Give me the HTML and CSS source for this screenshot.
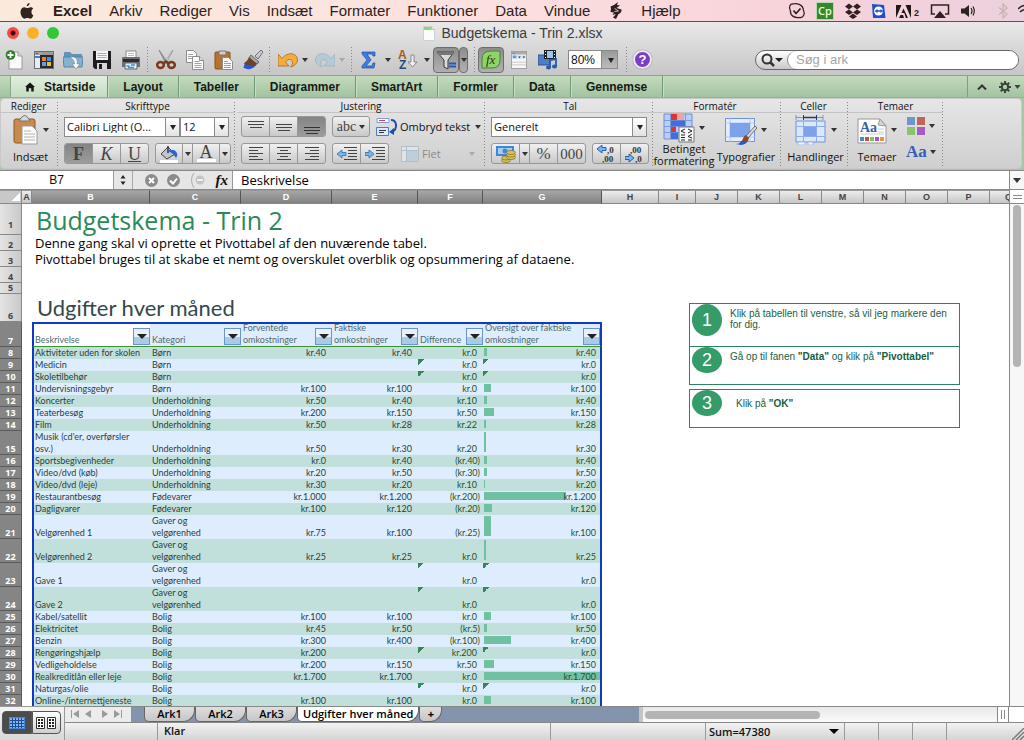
FILE: index.html
```html
<!DOCTYPE html>
<html lang="da">
<head>
<meta charset="utf-8">
<title>Budgetskema - Trin 2.xlsx</title>
<link rel="stylesheet" href="styles.css">
</head>
<body>
<nav class="menubar" aria-label="Menulinje">
  <svg class="apple" viewBox="0 0 14 16" width="14" height="16"><path d="M9.6 0c.1 1.600-1.300 3.200-2.800 3.200C6.600 1.700 8.100.2 9.600 0zM13.300 12.400c-.7 1.600-1.700 3.300-3 3.300-1.100 0-1.500-.7-2.900-.7s-1.800.7-2.900.7C2.700 15.700.5 12.200.5 9 .5 6 2.400 4.300 4.300 4.300c1.200 0 2.100.8 3 .8.900 0 2-.9 3.300-.9 1 0 2 .5 2.600 1.400-2.500 1.500-2.100 5.500.1 6.800z" fill="#33241f"/></svg>
  <button class="app">Excel</button>
  <button>Arkiv</button>
  <button>Rediger</button>
  <button>Vis</button>
  <button>Indsæt</button>
  <button>Formater</button>
  <button>Funktioner</button>
  <button>Data</button>
  <button>Vindue</button>
  <svg class="script" viewBox="0 0 12 17" width="12" height="17"><path d="M4 3l4-3-1 3 3 .5L6.500 6l5 1.500C12 10 10 11.500 8.500 12L6 17l-3-1.500L6 12 2.500 13 4 10.500.5 10 1 6.500l-.5-2z" fill="#2e1f1e"/><path d="M4.500 6.500l4 2.500-4 .5" fill="none" stroke="#f8d4da" stroke-width=".8"/></svg>
  <button>Hjælp</button>
  <div class="tray">
    <svg viewBox="0 0 18 18" width="18" height="18"><path d="M5 2C8 1 15 2 15.500 8.500 17.500 12 15 16 12 15.500 6 16.500 2 13 2.500 9 0 5 2.500 1.500 5 2z" fill="none" stroke="#2f2322" stroke-width="1.300"/><path d="M5.500 8.500l2.500 3 4.500-5" fill="none" stroke="#2f2322" stroke-width="1.800"/></svg>
    <svg viewBox="0 0 18 18" width="18" height="18"><rect x=".5" y=".5" width="17" height="17" fill="#37862f" stroke="#b8d8ab"/><text x="9" y="13" text-anchor="middle" font-family="Open Sans" font-size="11" font-weight="600" fill="#e4ffd0">Cp</text></svg>
    <svg viewBox="0 0 18 18" width="18" height="18"><path d="M5 1.500L9 4.500 5 7.500 1 4.500zM13 1.500l4 3-4 3-4-3zM5 7.500l4 3-4 2.500-4-3zM13 7.500l4 2.500-4 3-4-2.500zM9 11.500l4 3-4 2.500-4-2.500z" fill="#30201f"/></svg>
    <svg viewBox="0 0 14 16" width="14" height="16"><path d="M0 1l12 1 1.500 13H1z" fill="#1c50cf"/><circle cx="6.500" cy="8" r="4.500" fill="#fff"/><path d="M2.500 8l3-2v1.200h3V6l3 2-3 2V8.800h-3V10z" fill="#1c50cf"/></svg>
    <svg viewBox="0 0 24 16" width="24" height="16"><path d="M0 2h15v13H0z" fill="#221819"/><path d="M5.500 2h4L15 15h-3L7.500 5.500 5.500 10h2.800l1.500 5H8l-1-3H4.500L3 15H0z" fill="#f4d5dc"/><text x="18" y="13" font-family="Liberation Sans" font-size="9" font-weight="700" fill="#2f2322">2</text></svg>
    <svg viewBox="0 0 20 16" width="20" height="16"><path d="M5 11H1.500V2h17v9H15" fill="none" stroke="#2f2322" stroke-width="1.500"/><path d="M10 8l6 7H4z" fill="#2f2322"/></svg>
    <svg viewBox="0 0 16 16" width="16" height="16"><path d="M1 5.500h3.500L9 2v12L4.500 10.500H1z" fill="#2f2322"/><path d="M11 5q2 3 0 6M13 3.500q2.500 4.500 0 9" fill="none" stroke="#2f2322" stroke-width="1.200"/></svg>
    <svg class="bt" viewBox="0 0 10 16" width="10" height="16"><path d="M1 4.500l8 6.500-4 4V1l4 4-8 6.500" fill="none" stroke="#c7b3b2" stroke-width="1.300"/></svg>
    <svg viewBox="0 0 6 16" width="6" height="16"><path d="M0 6q3-3 6-3.500M2 9q2-2 4-2.300" fill="none" stroke="#2f2322" stroke-width="1.500"/></svg>
  </div>
</nav>

<header class="chrome">
  <div class="titlebar">
    <div class="lights"><button class="red" aria-label="Luk"></button><button class="amber" aria-label="Minimer"></button><button class="green" aria-label="Zoom"></button></div>
    <div class="doc">
      <svg viewBox="0 0 12 15" width="12" height="15"><path d="M.5.5h8l3 3v11H.5z" fill="#fbfdfb" stroke="#cfd3cf"/><path d="M1 1h7v3H1z" fill="#8bd77f"/><path d="M8.500.5v3h3" fill="#dfe8df" stroke="#bbb"/></svg>
      <h1>Budgetskema - Trin 2.xlsx</h1>
    </div>
  </div>
  <div class="toolbar">
    <button class="tool" aria-label="Ny"><svg viewBox="0 0 20 20" width="20" height="20"><path d="M4 2h9l4 4v13H4z" fill="#fafafa" stroke="#999"/><path d="M13 2v4h4" fill="#ddd" stroke="#999"/><circle cx="5.500" cy="5" r="4.800" fill="#2a7f22"/><path d="M5.500 2v6M2.500 5h6" stroke="#fff" stroke-width="1.800"/></svg></button>
    <button class="tool" aria-label="Galleri"><svg viewBox="0 0 20 20" width="20" height="20"><rect x=".5" y="1.500" width="19" height="17" fill="#e8eef5" stroke="#6b6f74"/><path d="M1 2h18v3H1z" fill="#9b9b9b"/><path d="M2 3h2v1H2z" fill="#e33"/><path d="M5 3h2v1H5z" fill="#fb3"/><path d="M1 6h5v2H1z" fill="#3b7fe0"/><path d="M6 5h13v13H6z" fill="#2d2a2e"/><path d="M8 7h4v4H8z" fill="#e8853b"/><path d="M13 7h4v4h-4z" fill="#4b8ce8"/><path d="M8 12h4v4H8z" fill="#5d9fe0"/><path d="M13 12h4v4h-4z" fill="#e8c13b"/></svg></button>
    <button class="tool" aria-label="Åbn"><svg viewBox="0 0 20 20" width="20" height="20"><path d="M1 3q0-1 1-1h5l2 2h9q1 0 1 1v11H1z" fill="#5f93b8"/><path d="M0 7h20l-1 10H1z" fill="#85b2d0" stroke="#5785a5"/><path d="M7 7c6-1 8 3 7 7h3l-4 5-4-5h2.500c0-3-1-5-4.500-7z" fill="#fff" stroke="#58788e" stroke-width=".5"/></svg></button>
    <button class="tool" aria-label="Gem"><svg viewBox="0 0 20 20" width="20" height="20"><path d="M1 1h18v18H3l-2-2z" fill="#1d1d20"/><path d="M4 1h12v9H4z" fill="#f2f4f8"/><path d="M5.500 3.500h9M5.500 5.500h9M5.500 7.500h9" stroke="#9fadc6"/><path d="M5 13h10v6H5z" fill="#d7d7d9"/><path d="M7 14h3v5H7z" fill="#1d1d20"/></svg></button>
    <button class="tool" aria-label="Udskriv"><svg viewBox="0 0 20 20" width="20" height="20"><path d="M5 1h10v8H5z" fill="#fdfdfd" stroke="#8a8a8a"/><path d="M7 3.500h6M7 5.500h6" stroke="#bbb"/><path d="M1 8q0-1 1-1h16q1 0 1 1v9H1z" fill="#6c6f73"/><path d="M2 9h16v3H2z" fill="#2b2d30"/><path d="M4 13h12v6H4z" fill="#dff0fb" stroke="#666"/><path d="M5.500 16h3M10 15h4M7 17.500h6" stroke="#3f8ed2" stroke-width="1.500"/></svg></button>
    <i class="dots"></i>
    <button class="tool" aria-label="Klip"><svg viewBox="0 0 20 20" width="20" height="20"><path d="M3 0l9 13-2 1z" fill="#999" stroke="#666" stroke-width=".5"/><path d="M17 0L8 13l2 1z" fill="#ddd" stroke="#777" stroke-width=".5"/><g fill="none" stroke="#7b3a1c" stroke-width="2.500"><ellipse cx="4.500" cy="15" rx="3.300" ry="3"/><ellipse cx="15.500" cy="15" rx="3.300" ry="3"/><path d="M7 13.500l3-2 3 2"/></g></svg></button>
    <button class="tool" aria-label="Kopier"><svg viewBox="0 0 20 20" width="20" height="20"><g fill="#fcfcfc" stroke="#8d8d8d"><path d="M1.500.5h7l3 3v9h-10z"/><path d="M7.500 6.500h7l4 4v9h-11z"/><path d="M14.500 6.500v4h4" fill="#ddd"/></g><path d="M3 4.500h5M3 6.500h4M3 8.500h4M9.500 11.500h5M9.500 13.500h7M9.500 15.500h7M9.500 17.500h7" stroke="#a3a3a3"/></svg></button>
    <button class="tool" aria-label="Sæt ind"><svg viewBox="0 0 20 20" width="20" height="20"><rect x="1" y="2" width="15" height="17" rx="1" fill="#b8722f" stroke="#8a531e"/><path d="M5 1h7v4H5z" fill="#cfcfcf" stroke="#777"/><path d="M8.500 7.500h6l4 4v8h-10z" fill="#fcfcfc" stroke="#8d8d8d"/><path d="M10 11.500h4M10 13.500h7M10 15.500h7M10 17.500h7" stroke="#a3a3a3"/></svg></button>
    <button class="tool" aria-label="Formatpensel"><svg viewBox="0 0 20 20" width="20" height="20"><path d="M12 6l6-6 2 2-5 7z" fill="#c8ccd2" stroke="#6a6f78"/><path d="M8 5l8 7-2 2-8-6z" fill="#a8a8a8" stroke="#666"/><path d="M6 7l8 7c-2 3-5 4-8 4L1 13c2-1 4-3 5-6z" fill="#6d4328"/><path d="M1 13c3 2 6 2 11 3-3 4-9 4-12 1 1 0 2-2 1-4z" fill="#2a55cf"/></svg></button>
    <i class="dots"></i>
    <button class="tool" aria-label="Fortryd"><svg viewBox="0 0 20 20" width="20" height="20"><path d="M0 4v12h11L7.500 12c3-4 7-3 7 1 0 2-1 3-2 4 4-1 7-4 7-7C19.500 3 10 1 4 8.500z" fill="#f5ac3c" stroke="#a3691c" stroke-width=".8"/></svg></button><span class="caret"></span>
    <button class="tool" aria-label="Gentag" disabled><svg viewBox="0 0 20 20" width="20" height="20"><path d="M20 4v12H9l3.500-4c-3-4-7-3-7 1 0 2 1 3 2 4-4-1-7-4-7-7C.5 3 10 1 16 8.500z" fill="#b4cbd6" stroke="#9cb3be" stroke-width=".8"/></svg></button><span class="caret dim"></span>
    <i class="dots last"></i>
    <button class="tool narrow" aria-label="Autosum"><svg viewBox="0 0 16 18" width="16" height="18"><path d="M1 1h13v4h-2l-1-2H6l4 6-5 6h6l1-3h2l-1 5H1v-2l5-6-5-6z" fill="#3c7fe0" stroke="#1f4fa3" stroke-width=".7"/></svg></button><span class="caret wide"></span>
    <button class="tool narrow" aria-label="Sorter"><svg viewBox="0 0 20 20" width="20" height="20"><text x="0" y="9" font-family="Liberation Sans" font-size="12" font-weight="700" fill="#a55b1c">A</text><text x="1" y="19" font-family="Liberation Sans" font-size="12" font-weight="700" fill="#1f4f80">Z</text><path d="M13 5h3v7h3l-4.500 5L10 12h3z" fill="#eee" stroke="#777" stroke-width=".8"/></svg></button><span class="caret wide"></span>
    <button class="tool pressed" aria-label="Filter"><svg viewBox="0 0 20 20" width="20" height="20"><path d="M1 2h17l-6 8v9l-4-2v-7z" fill="#dadada" stroke="#3a3a3a"/><path d="M1 2h17l-2 3H3z" fill="#777"/><path d="M13 13.500h7M13 16.500h7" stroke="#2456c8" stroke-width="2"/></svg></button><button class="pressed slim" aria-label="Filtervalg"><span class="caret"></span></button>
    <i class="dots"></i>
    <button class="tool pressed" aria-label="Formelbygger"><svg viewBox="0 0 20 20" width="20" height="20"><path d="M1 18V9q0-8 9-8h9v9q0 8-8 8z" fill="#8ed36c" stroke="#47852f"/><text x="5" y="14" font-family="Liberation Serif" font-style="italic" font-size="13" fill="#1c3a12">fx</text></svg></button>
    <button class="tool" aria-label="Værktøjskasse"><svg viewBox="0 0 18 20" width="16" height="18"><rect x=".5" y=".5" width="17" height="19" fill="#f7f7f7" stroke="#999"/><path d="M1 1h16v3H1z" fill="#aaa"/><path d="M2 2h2v1H2z" fill="#e33"/><path d="M1 4h16v5H1z" fill="#dce9f7"/><path d="M2 5h4v3H2z" fill="#5b9ae0"/><path d="M8 6h3l-1.500 2zM13 6h3l-1.500 2z" fill="#333"/><path d="M1 12.500h16M1 15.500h16" stroke="#c5c5c5"/></svg></button>
    <button class="tool" aria-label="Medier"><svg viewBox="0 0 20 20" width="20" height="20"><path d="M0 5h12v10H0z" fill="#4d7fc3" stroke="#2d5796"/><path d="M6 0h12v9H6z" fill="#1f2022"/><path d="M9 1h6v7H9z" fill="#9cc7ee"/><path d="M7 1.500h1M7 4.500h1M7 7.500h1M16 1.500h1M16 4.500h1M16 7.500h1" stroke="#fff"/><path d="M12 17v-7l6-1v7" fill="none" stroke="#2b5aa5" stroke-width="1.800"/><ellipse cx="10.500" cy="17.500" rx="2.500" ry="2" fill="#2b5aa5"/><ellipse cx="16.500" cy="16.500" rx="2.500" ry="2" fill="#2b5aa5"/></svg></button>
    <label class="pick zoom"><select aria-label="Zoom"><option>80%</option></select></label>
    <i class="dots"></i>
    <button class="help" aria-label="Hjælp">?</button>
    <div class="search">
      <svg viewBox="0 0 24 16" width="24" height="16"><circle cx="7" cy="7" r="4.500" fill="none" stroke="#333" stroke-width="2"/><path d="M10 10l4 4" stroke="#333" stroke-width="2.500"/><path d="M15 6h8l-4 4z" fill="#222"/></svg>
      <input type="search" placeholder="Søg i ark" aria-label="Søg i ark">
    </div>
  </div>
</header>

<nav class="tabs" aria-label="Bånd">
  <button class="tab active"><svg viewBox="0 0 12 11" width="10" height="10"><path d="M6 0l6 5.500h-1.500V11h-3V7h-3v4h-3V5.500H0z" fill="#151815"/></svg>Startside</button>
  <button class="tab">Layout</button>
  <button class="tab">Tabeller</button>
  <button class="tab">Diagrammer</button>
  <button class="tab">SmartArt</button>
  <button class="tab">Formler</button>
  <button class="tab">Data</button>
  <button class="tab">Gennemse</button>
  <div class="tabtools">
    <button aria-label="Skjul bånd"><svg viewBox="0 0 10 6" width="10" height="6"><path d="M1 5.500l4-4 4 4" fill="none" stroke="#333" stroke-width="2"/></svg></button>
    <button aria-label="Indstillinger"><svg viewBox="0 0 22 12" width="22" height="12"><circle cx="6" cy="6" r="3.200" fill="none" stroke="#39453a" stroke-width="2"/><path d="M6 0v2M6 10v2M0 6h2M10 6h2M1.800 1.800l1.500 1.500M8.700 8.700l1.500 1.500M10.200 1.800L8.700 3.300M3.300 8.700l-1.500 1.500" stroke="#39453a" stroke-width="2"/><path d="M15.500 4h6l-3 4z" fill="#39453a"/></svg></button>
  </div>
</nav>

<div class="ribbon">
  <div class="panel">
    <section class="group g-edit">
      <h2>Rediger</h2>
      <button class="big"><span class="pic"><svg viewBox="0 0 26 30" width="26" height="30"><rect x="1" y="4" width="21" height="24" rx="2" fill="#c98b4d" stroke="#8a5a2a"/><path d="M6 6l2-3q4-5 7 0l2 3z" fill="#d8d8d8" stroke="#777"/><path d="M9 11h10l5 5v13H9z" fill="#fbfbfb" stroke="#999"/><path d="M11 16h7M11 19h11M11 22h11M11 25h11" stroke="#b5b5b5"/></svg><span class="caret"></span></span>Indsæt</button>
    </section>
    <section class="group g-font">
      <h2>Skrifttype</h2>
      <div class="line">
        <label class="pick face"><select aria-label="Skrifttype"><option>Calibri Light (O...</option></select></label><label class="pick size"><select aria-label="Størrelse"><option>12</option></select></label>
      </div>
      <div class="line apart">
        <div class="seg serif"><button class="on"><b>F</b></button><button><em>K</em></button><button><u>U</u></button></div>
        <div class="seg serif"><button aria-label="Fyldfarve"><svg viewBox="0 0 20 18" width="20" height="18"><path d="M9 2l7 7-8 5-6-5z" fill="#bfc6cf" stroke="#444"/><path d="M9 8V1" stroke="#333" stroke-width="1.500"/><path d="M8 5l7 0c4 3 4 5 2 8l-3-4z" fill="#2e63cc"/><path d="M1 15h18v3H1z" fill="#fff"/></svg></button><button class="dd" aria-label="Fyldfarver"><span class="caret"></span></button><button aria-label="Skriftfarve"><span class="ink">A</span></button><button class="dd" aria-label="Skriftfarver"><span class="caret"></span></button></div>
      </div>
    </section>
    <section class="group g-align">
      <h2>Justering</h2>
      <div class="line">
        <div class="seg"><button aria-label="Top"><svg viewBox="0 0 16 16" width="16" height="16"><path d="M0 2.500h16M0 5.500h16M2 8.500h12" stroke="#444"/></svg></button><button aria-label="Midt"><svg viewBox="0 0 16 16" width="16" height="16"><path d="M0 5.500h16M0 8.500h16M2 11.500h12" stroke="#444"/></svg></button><button class="on" aria-label="Bund"><svg viewBox="0 0 16 16" width="16" height="16"><path d="M0 8.500h16M0 11.500h16M2 14.500h12" stroke="#333"/></svg></button></div>
        <div class="seg serif abc"><button>abc<span class="caret"></span></button></div>
        <button class="flat wrap"><svg viewBox="0 0 22 20" width="22" height="20"><path d="M1 1.500h12v4H1z" fill="#fff" stroke="#7d9fdc"/><path d="M3 3.500h6" stroke="#d44"/><path d="M.5 10.500h12v8H.5z" fill="#dce8fb" stroke="#4d7acb"/><path d="M3 13.500h7M3 15.500h5" stroke="#333"/><path d="M15 3c6 0 7 9 1 12" fill="none" stroke="#1f4fa3" stroke-width="2"/><path d="M13 15l5-4v7z" fill="#1f4fa3"/></svg><span>Ombryd tekst</span><i class="caret"></i></button>
      </div>
      <div class="line">
        <div class="seg"><button aria-label="Venstre"><svg viewBox="0 0 16 14" width="16" height="14"><path d="M1 .5h14M1 3.500h9M1 6.500h14M1 9.500h9M1 12.500h14" stroke="#444"/></svg></button><button aria-label="Centreret"><svg viewBox="0 0 16 14" width="16" height="14"><path d="M1 .5h14M4 3.500h8M1 6.500h14M4 9.500h8M1 12.500h14" stroke="#444"/></svg></button><button aria-label="Højre"><svg viewBox="0 0 16 14" width="16" height="14"><path d="M1 .5h14M6 3.500h9M1 6.500h14M6 9.500h9M1 12.500h14" stroke="#444"/></svg></button></div>
        <div class="seg"><button aria-label="Formindsk indrykning"><svg viewBox="0 0 20 14" width="20" height="14"><path d="M7 .5h13M11 3.500h9M11 6.500h9M11 9.500h9M7 12.500h13" stroke="#444"/><path d="M0 7l5-4v2.500h4v3H5V11z" fill="#7bb6ea" stroke="#2e6fae" stroke-width=".8"/></svg></button><button aria-label="Forøg indrykning"><svg viewBox="0 0 20 14" width="20" height="14"><path d="M7 .5h13M11 3.500h9M11 6.500h9M11 9.500h9M7 12.500h13" stroke="#444"/><path d="M9 7L4 3v2.500H0v3h4V11z" fill="#7bb6ea" stroke="#2e6fae" stroke-width=".8"/></svg></button></div>
        <button class="flat merge" disabled><svg viewBox="0 0 18 16" width="18" height="16"><path d="M.5.5h17v15H.5zM5.500 0v16M0 4.500h18" fill="#dde5ea" stroke="#b3bfc7"/><path d="M6 5h11v10H6z" fill="#bccfda"/></svg><span>Flet</span><i class="caret dim"></i></button>
      </div>
    </section>
    <section class="group g-num">
      <h2>Tal</h2>
      <div class="line"><label class="pick fmt"><select aria-label="Talformat"><option>Generelt</option></select></label></div>
      <div class="line apart">
        <div class="seg serif"><button aria-label="Valuta"><svg viewBox="0 0 20 18" width="20" height="18"><path d="M0 1h18v10H0z" fill="#3f87d8"/><path d="M2 3h14v6H2z" fill="#a7cdf3"/><circle cx="9" cy="6" r="2.500" fill="#3f87d8"/><g fill="#d8c45a" stroke="#7d6a1f" stroke-width=".7"><ellipse cx="10" cy="15.500" rx="4.500" ry="2"/><ellipse cx="10" cy="13" rx="4.500" ry="2"/><ellipse cx="15" cy="12.500" rx="4.500" ry="2"/><ellipse cx="15" cy="10" rx="4.500" ry="2"/><ellipse cx="15" cy="7.500" rx="4.500" ry="2"/></g></svg></button><button class="dd" aria-label="Valutaer"><span class="caret"></span></button><button class="pct">%</button><button class="kilo">000</button></div>
        <div class="seg dec"><button aria-label="Flere decimaler"><svg viewBox="0 0 20 18" width="20" height="18"><path d="M0 4l5-4v2.500h4v3H5V8z" fill="#7bb6ea" stroke="#2563b5"/><text x="10" y="8" font-family="Liberation Serif" font-size="9" font-weight="700" fill="#333">,0</text><text x="5" y="17" font-family="Liberation Serif" font-size="9" font-weight="700" fill="#333">,00</text></svg></button><button aria-label="Færre decimaler"><svg viewBox="0 0 20 18" width="20" height="18"><path d="M9 13L4 9v2.500H0v3h4V17z" fill="#7bb6ea" stroke="#2563b5"/><text x="5" y="8" font-family="Liberation Serif" font-size="9" font-weight="700" fill="#333">,00</text><text x="10" y="17" font-family="Liberation Serif" font-size="9" font-weight="700" fill="#333">,0</text></svg></button></div>
      </div>
    </section>
    <section class="group g-format">
      <h2>Formatér</h2>
      <div class="bigs">
        <button class="big tight"><span class="pic"><svg viewBox="0 0 32 30" width="32" height="30"><path d="M1 1h28v25H1z" fill="#b9cdf5" stroke="#6c8fd8"/><path d="M8 1h6v6H8zM8 13h5v6H8z" fill="#e03232"/><path d="M14 1h7v6h-7z" fill="#f7a0a0"/><path d="M8 7h14v6H8zM8 19h7v7H8z" fill="#3d6fe0"/><path d="M1 7.500h28M1 13.500h28M1 19.500h28M7.500 1v25M22.500 1v25" stroke="#6c8fd8" stroke-width=".8"/><path d="M16 14h15v15H16z" fill="#fafafa" stroke="#777"/><path d="M22 16l-4 2 4 2M18 22h4M18 24.500h4M18 27h4M25 16l4 2-4 2M29 21l-4 2.500 4 1.500M25 27h4" fill="none" stroke="#222"/></svg><span class="caret"></span></span>Betinget<br>formatering</button>
        <button class="big"><span class="pic"><svg viewBox="0 0 32 30" width="32" height="30"><path d="M.5 3.500h29v23H.5z" fill="#e4edfc" stroke="#6f93d6"/><path d="M0 8h30M0 22h30M5 3v24M25 3v24" stroke="#a9c1ee" stroke-width=".8"/><path d="M5 8h20v14H5z" fill="#7ea2ea"/><path d="M30 11l2 2-9 10-2-2z" fill="#d8d8d8" stroke="#555" stroke-width=".8"/><path d="M21 20l3 3c-1 5-5 6-9 5 3-2 3-7 6-8z" fill="#8b4b22"/><path d="M16 26l6 1c-3 4-8 3-11 2q4 0 5-3z" fill="#2a5ac8"/></svg><span class="caret"></span></span>Typografier</button>
      </div>
    </section>
    <section class="group g-cells">
      <h2>Celler</h2>
      <button class="big"><span class="pic"><svg viewBox="0 0 32 30" width="32" height="30"><path d="M9 2.500h12" stroke="#1c3f7c" stroke-width="1.500"/><path d="M1 2.500h7M22 2.500h6M1 0v5M28 0v5" stroke="#7c96c4"/><path d="M8.500 0v5M21.500 0v5" stroke="#1c3f7c"/><path d="M1 6h29v21H1z" fill="#dbe7fb" stroke="#6f93d6"/><path d="M1 11.500h29M1 21.500h29M8.500 6v21M21.500 6v21" stroke="#8fade6"/><path d="M9 12h12v9H9z" fill="#7ea2ea"/><path d="M3 27h7v3H3zM13 27h5v3h-5z" fill="#eef4ff" stroke="#8fade6" stroke-width=".7"/></svg><span class="caret"></span></span>Handlinger</button>
    </section>
    <section class="group g-theme">
      <h2>Temaer</h2>
      <div class="bigs">
        <button class="big"><span class="pic"><svg viewBox="0 0 30 30" width="30" height="30"><path d="M1 4h22l6 7v17H1z" fill="#fdfdfd" stroke="#999"/><path d="M23 4l-2 6 8 1z" fill="#d5d5d5" stroke="#999"/><text x="3" y="17" font-family="Liberation Serif" font-size="14" font-weight="700" fill="#3560ae">Aa</text><path d="M21 14h6M21 17h6M4 19h23" stroke="#ccc"/><path d="M3 22h4v4H3z" fill="#4f86c6"/><path d="M8 22h4v4H8z" fill="#c0504d"/><path d="M13 22h4v4h-4z" fill="#7fc35a"/><path d="M18 22h4v4h-4z" fill="#9b59c4"/><path d="M23 22h4v4h-4z" fill="#e69a3c"/></svg><span class="caret"></span></span>Temaer</button>
        <div class="stack">
          <button class="flat" aria-label="Farver"><svg viewBox="0 0 20 20" width="20" height="20"><path d="M1 1h8v8H1z" fill="#6f97c9"/><path d="M11 1h8v8h-8z" fill="#c0655a"/><path d="M1 11h8v8H1z" fill="#8ac46c"/><path d="M11 11h8v8h-8z" fill="#a25cc4"/></svg><i class="caret"></i></button>
          <button class="flat fonts"><span>Aa</span><i class="caret"></i></button>
        </div>
      </div>
    </section>
  </div>
</div>

<div class="formula">
  <input class="ref" aria-label="Navnefelt" value="B7">
  <button class="spin" aria-label="Navne"><svg viewBox="0 0 6 12" width="6" height="12"><path d="M3 1l2.500 3.500h-5zM3 11l2.500-3.500h-5z" fill="#222"/></svg></button>
  <div class="fxbtns">
    <button aria-label="Annuller"><svg viewBox="0 0 13 13" width="13" height="13"><circle cx="6.500" cy="6.500" r="6.500" fill="#8b8b8b"/><path d="M4 4l5 5M9 4l-5 5" stroke="#fff" stroke-width="2"/></svg></button>
    <button aria-label="Angiv"><svg viewBox="0 0 13 13" width="13" height="13"><circle cx="6.500" cy="6.500" r="6.500" fill="#8b8b8b"/><path d="M3 6.500l3 3 4-5" fill="none" stroke="#fff" stroke-width="2"/></svg></button>
    <button aria-label="Formelbygger"><svg viewBox="0 0 18 15" width="18" height="15"><path d="M5 0Q0 7 5 15" fill="none" stroke="#aaa"/><circle cx="11" cy="7" r="4.500" fill="#c4c4c4"/><path d="M8 7h6" stroke="#fff" stroke-width="1.500"/></svg></button>
    <button class="fx">fx</button>
  </div>
  <input class="entry" aria-label="Formellinje" value="Beskrivelse">
  <button class="more" aria-label="Udvid"><span class="caret"></span></button>
</div>

<main class="work">
  <div class="sheet">
    <table class="grid">
      <colgroup><col class="w-rows"><col class="w-a"><col class="w-b"><col class="w-c"><col class="w-d"><col class="w-e"><col class="w-f"><col class="w-g"><col class="w-h"><col class="w-i"><col class="w-n"><col class="w-n"><col class="w-n"><col class="w-n"><col class="w-n"><col class="w-n"><col class="w-n"><col></colgroup>
      <thead><tr><th class="corner"></th><th>A</th><th class="sel">B</th><th class="sel">C</th><th class="sel">D</th><th class="sel">E</th><th class="sel">F</th><th class="sel">G</th><th>H</th><th>I</th><th>J</th><th>K</th><th>L</th><th>M</th><th>N</th><th>O</th><th>P</th><th class="cut">Q</th></tr></thead>
      <tbody class="intro">
        <tr class="h1"><th>1</th><td></td><td colspan="16" class="title">Budgetskema - Trin 2</td></tr>
        <tr class="h2"><th>2</th><td></td><td colspan="16" class="lead">Denne gang skal vi oprette et Pivottabel af den nuværende tabel.</td></tr>
        <tr class="h2"><th>3</th><td></td><td colspan="16" class="lead">Pivottabel bruges til at skabe et nemt og overskulet overblik og opsummering af dataene.</td></tr>
        <tr class="h2"><th>4</th><td colspan="17"></td></tr>
        <tr class="h5"><th>5</th><td colspan="17"></td></tr>
        <tr class="h6"><th>6</th><td></td><td colspan="16" class="subtitle">Udgifter hver måned</td></tr>
      </tbody>
      <tbody class="data">
        <tr class="heads"><th>7</th><td></td>
          <td><div><span>Beskrivelse</span><button aria-label="Filtrer Beskrivelse"></button></div></td>
          <td><div><span>Kategori</span><button aria-label="Filtrer Kategori"></button></div></td>
          <td><div><span>Forventede omkostninger</span><button aria-label="Filtrer Forventede"></button></div></td>
          <td><div><span>Faktiske omkostninger</span><button aria-label="Filtrer Faktiske"></button></div></td>
          <td><div><span>Difference</span><button aria-label="Filtrer Difference"></button></div></td>
          <td><div><span>Oversigt over faktiske omkostninger</span><button aria-label="Filtrer Oversigt"></button></div></td></tr>
        <tr><th>8</th><td></td><td>Aktiviteter uden for skolen</td><td>Børn</td><td>kr.40</td><td>kr.40</td><td>kr.0</td><td><i style="width:3px"></i><span>kr.40</span></td></tr>
        <tr><th>9</th><td></td><td>Medicin</td><td>Børn</td><td></td><td></td><td class="mark">kr.0</td><td class="mark"><span>kr.0</span></td></tr>
        <tr><th>10</th><td></td><td>Skoletilbehør</td><td>Børn</td><td></td><td></td><td class="mark">kr.0</td><td class="mark"><span>kr.0</span></td></tr>
        <tr><th>11</th><td></td><td>Undervisningsgebyr</td><td>Børn</td><td>kr.100</td><td>kr.100</td><td>kr.0</td><td><i style="width:7px"></i><span>kr.100</span></td></tr>
        <tr><th>12</th><td></td><td>Koncerter</td><td>Underholdning</td><td>kr.50</td><td>kr.40</td><td>kr.10</td><td><i style="width:3px"></i><span>kr.40</span></td></tr>
        <tr><th>13</th><td></td><td>Teaterbesøg</td><td>Underholdning</td><td>kr.200</td><td>kr.150</td><td>kr.50</td><td><i style="width:10px"></i><span>kr.150</span></td></tr>
        <tr><th>14</th><td></td><td>Film</td><td>Underholdning</td><td>kr.50</td><td>kr.28</td><td>kr.22</td><td><i style="width:2px"></i><span>kr.28</span></td></tr>
        <tr class="tall"><th>15</th><td></td><td>Musik (cd'er, overførsler<br>osv.)</td><td>Underholdning</td><td>kr.50</td><td>kr.30</td><td>kr.20</td><td><i style="width:2px"></i><span>kr.30</span></td></tr>
        <tr><th>16</th><td></td><td>Sportsbegivenheder</td><td>Underholdning</td><td>kr.0</td><td>kr.40</td><td class="neg">(kr.40)</td><td><i style="width:3px"></i><span>kr.40</span></td></tr>
        <tr><th>17</th><td></td><td>Video/dvd (køb)</td><td>Underholdning</td><td>kr.20</td><td>kr.50</td><td class="neg">(kr.30)</td><td><i style="width:3px"></i><span>kr.50</span></td></tr>
        <tr><th>18</th><td></td><td>Video/dvd (leje)</td><td>Underholdning</td><td>kr.30</td><td>kr.20</td><td>kr.10</td><td><i style="width:1px"></i><span>kr.20</span></td></tr>
        <tr><th>19</th><td></td><td>Restaurantbesøg</td><td>Fødevarer</td><td>kr.1.000</td><td>kr.1.200</td><td class="neg">(kr.200)</td><td><i style="width:82px"></i><span>kr.1.200</span></td></tr>
        <tr><th>20</th><td></td><td>Dagligvarer</td><td>Fødevarer</td><td>kr.100</td><td>kr.120</td><td class="neg">(kr.20)</td><td><i style="width:8px"></i><span>kr.120</span></td></tr>
        <tr class="tall"><th>21</th><td></td><td>Velgørenhed 1</td><td>Gaver og<br>velgørenhed</td><td>kr.75</td><td>kr.100</td><td class="neg">(kr.25)</td><td><i style="width:7px"></i><span>kr.100</span></td></tr>
        <tr class="tall"><th>22</th><td></td><td>Velgørenhed 2</td><td>Gaver og<br>velgørenhed</td><td>kr.25</td><td>kr.25</td><td>kr.0</td><td><i style="width:2px"></i><span>kr.25</span></td></tr>
        <tr class="tall"><th>23</th><td></td><td>Gave 1</td><td>Gaver og<br>velgørenhed</td><td></td><td></td><td class="mark">kr.0</td><td class="mark"><span>kr.0</span></td></tr>
        <tr class="tall"><th>24</th><td></td><td>Gave 2</td><td>Gaver og<br>velgørenhed</td><td></td><td></td><td class="mark">kr.0</td><td class="mark"><span>kr.0</span></td></tr>
        <tr><th>25</th><td></td><td>Kabel/satellit</td><td>Bolig</td><td>kr.100</td><td>kr.100</td><td>kr.0</td><td><i style="width:7px"></i><span>kr.100</span></td></tr>
        <tr><th>26</th><td></td><td>Elektricitet</td><td>Bolig</td><td>kr.45</td><td>kr.50</td><td class="neg">(kr.5)</td><td><i style="width:3px"></i><span>kr.50</span></td></tr>
        <tr><th>27</th><td></td><td>Benzin</td><td>Bolig</td><td>kr.300</td><td>kr.400</td><td class="neg">(kr.100)</td><td><i style="width:27px"></i><span>kr.400</span></td></tr>
        <tr><th>28</th><td></td><td>Rengøringshjælp</td><td>Bolig</td><td>kr.200</td><td></td><td class="mark">kr.200</td><td class="mark"><span>kr.0</span></td></tr>
        <tr><th>29</th><td></td><td>Vedligeholdelse</td><td>Bolig</td><td>kr.200</td><td>kr.150</td><td>kr.50</td><td><i style="width:10px"></i><span>kr.150</span></td></tr>
        <tr><th>30</th><td></td><td>Realkreditlån eller leje</td><td>Bolig</td><td>kr.1.700</td><td>kr.1.700</td><td>kr.0</td><td><i style="width:116px"></i><span>kr.1.700</span></td></tr>
        <tr><th>31</th><td></td><td>Naturgas/olie</td><td>Bolig</td><td></td><td></td><td class="mark">kr.0</td><td class="mark"><span>kr.0</span></td></tr>
        <tr><th>32</th><td></td><td>Online-/internettjeneste</td><td>Bolig</td><td>kr.100</td><td>kr.100</td><td>kr.0</td><td><i style="width:7px"></i><span>kr.100</span></td></tr>
      </tbody>
    </table>
    <ol class="steps">
      <li class="first"><b class="no">1</b><p>Klik på tabellen til venstre, så vil jeg markere den for dig.</p></li>
      <li><b class="no">2</b><p>Gå op til fanen <strong>"Data"</strong> og klik på <strong>"Pivottabel"</strong></p></li>
      <li class="last"><b class="no">3</b><p>Klik på <strong>"OK"</strong></p></li>
    </ol>
  </div>
  <div class="vscroll"><span class="split"></span><span class="thumb"></span></div>
</main>

<footer class="bottom">
  <div class="views">
    <button class="on" aria-label="Normal"><svg viewBox="0 0 16 12" width="16" height="12"><path d="M0 0h16v12H0z" fill="#7fb6f2"/><path d="M0 3.500h16M0 6.500h16M0 9.500h16M3.500 0v12M6.500 0v12M9.500 0v12M12.500 0v12" stroke="#1d4d8c"/><path d="M.5.5h15v11H.5z" fill="none" stroke="#3f85dd"/></svg></button><button aria-label="Sidelayout"><svg viewBox="0 0 20 12" width="20" height="12"><g fill="#fff" stroke="#333"><path d="M.5.500h8v11h-8zM11.500.500h8v11h-8z"/></g><path d="M2 3h2M5 3h2M2 6h2M5 6h2M2 9h2M5 9h2M13 3h2M16 3h2M13 6h2M16 6h2M13 9h2M16 9h2" stroke="#222" stroke-width="2"/></svg></button>
  </div>
  <div class="strip">
    <div class="navs"><svg viewBox="0 0 54 10" width="54" height="10"><g fill="#9a9a9a"><path d="M1 1h1v8H1zM9 1v8L3 5zM21 1v8l-6-4zM32 1v8l6-4zM44 1v8l6-4zM51 1h1v8h-1z"/></g></svg></div>
    <div class="sheets">
      <button>Ark1</button><button>Ark2</button><button>Ark3</button><button class="on">Udgifter hver måned</button><button class="add" aria-label="Nyt ark">+</button>
    </div>
    <div class="hscroll"><span class="thumb"></span></div>
    <span class="hsplit"></span>
    <span class="end"></span>
  </div>
  <div class="status">
    <span class="s1"></span><span class="s2">Klar</span><span class="s3"></span><button class="s4">Sum=47380<i class="caret"></i></button><span class="s5"></span><span class="s5"></span><span class="s5"></span><span class="s6"><svg viewBox="0 0 12 12" width="12" height="12"><path d="M0 12L12 0M4 12l8-8M8 12l4-4" stroke="#777" stroke-width="1.300"/></svg></span>
  </div>
</footer>
</body>
</html>
```
FILE: styles.css
```css
* { box-sizing: border-box; }
body {
  margin: 0;
  height: 100vh;
  display: flex;
  flex-direction: column;
  overflow: hidden;
  font: 11px/12px "Open Sans", "Noto Sans", sans-serif;
  color: #111;
  background: #fff;
}
button, input, select { font: inherit; color: inherit; margin: 0; padding: 0; border: 0; background: none; border-radius: 0; outline: 0; }
button { display: flex; align-items: center; justify-content: center; white-space: nowrap; }
h1, h2, p, ol { margin: 0; padding: 0; font-weight: 400; }
svg { display: block; flex: none; }
.caret { flex: none; width: 0; height: 0; border: 3px solid transparent; border-top: 4px solid #333; border-bottom: 0; }
.caret.dim { border-top-color: #aaa; }

/* Menu bar */
.menubar {
  display: flex; align-items: center; gap: 17px;
  height: 22px; padding-left: 20px;
  font: 15px/20px "Liberation Sans", Arial, sans-serif; color: #2b1e1d;
  background: linear-gradient(90deg, #fbeadb, #fce1e0 45%, #f8d4da 75%, #ebd0dd);
  border-bottom: 1px solid #6a4a4c;
}
.menubar .app { font-weight: 700; padding-left: 2px; }
.menubar .script { margin: 0 2px 0 3px; }
.tray { display: flex; align-items: center; gap: 10px; margin-left: auto; }
.tray .bt { margin-left: 12px; }

/* Title bar and toolbar */
.chrome { background: linear-gradient(#e9e9e9, #c6c6c6); border-bottom: 1px solid #9a9a9a; }
.titlebar { display: grid; grid-template-columns: 1fr auto 1fr; align-items: center; height: 22px; }
.lights { display: flex; gap: 8px; padding-left: 7px; }
.lights button { width: 12px; height: 12px; border-radius: 50%; }
.red { background: radial-gradient(circle, #3a0a08 0 2px, #fb4a46 3px); }
.amber { background: #fbb02c; }
.green { background: #31c837; }
.doc { display: flex; align-items: center; gap: 6px; padding-left: 2px; }
.doc h1 { font: 14px/18px "Liberation Sans", Arial, sans-serif; color: #3c3c3c; }
.toolbar { display: flex; align-items: center; height: 31px; }
.tool { width: 29px; height: 26px; flex: none; }
.toolbar > .caret { margin: 0 2px 0 0; }
.toolbar > .caret.wide { margin: 0 3px; }
.tool.narrow { width: 27px; }
.dots { width: 6px; height: 26px; flex: none; background: repeating-linear-gradient(#888 0 1px, transparent 1px 3px) 2px 0 / 1px 100% no-repeat; }
.dots.last { margin-left: 2px; }
.pressed { width: 26px; height: 26px; flex: none; border: 1px solid #6e6e6e; border-radius: 4px; background: linear-gradient(#8e8e8e, #b0b0b0); }
.tool.pressed { width: 26px; }
.pressed.slim { width: 9px; margin-right: 4px; }
.pick { position: relative; display: block; background: #fff; border: 1px solid #8a8a8a; flex: none; }
.pick::before { content: ""; position: absolute; top: 0; right: 0; bottom: 0; width: 13px; background: linear-gradient(#fff, #e2e2e2); border-left: 1px solid #8a8a8a; pointer-events: none; }
.pick::after { content: ""; position: absolute; right: 3px; top: 50%; margin-top: -2px; border: 3px solid transparent; border-top: 5px solid #222; border-bottom: 0; pointer-events: none; }
.pick select { appearance: none; display: block; width: 100%; height: 100%; padding-left: 2px; }
.zoom { width: 50px; height: 19px; margin: 0 6px; font: 12px/16px "Liberation Sans", Arial, sans-serif; }
.zoom::before { width: 15px; background: linear-gradient(#9a9a9a, #bcbcbc); }
.help { width: 19px; height: 19px; margin-left: 3px; border: 2px solid #efeaf5; border-radius: 50%; background: #7b3fc4; color: #fff; font: 700 13px/15px "Liberation Sans", Arial, sans-serif; box-shadow: 0 0 1px #555; }
.search { display: flex; align-items: center; width: 264px; height: 20px; margin: 0 5px 0 auto; padding-left: 4px; border: 1px solid #666; border-radius: 10px; background: linear-gradient(#fff, #c8c8c8); gap: 3px; }
.search input { flex: 1; min-width: 0; height: 18px; padding-left: 8px; border-left: 1px solid #888; border-radius: 9px; background: #fff; font: 13px/16px "Liberation Sans", Arial, sans-serif; }
.search input::placeholder { color: #a5a5a5; }

/* Ribbon tabs */
.tabs { display: flex; height: 21px; padding-left: 10px; background: linear-gradient(#c3dabd, #a2c3a0); font: 700 12px/16px "Liberation Sans", Arial, sans-serif; color: #161a16; }
.tab { padding: 0 15px; border-right: 1px solid #6f9a70; box-shadow: 1px 0 #c8dfc4; }
.tab.active { padding: 0 12px 0 14px; gap: 9px; background: linear-gradient(#e2efdf, #c4dcc1); border-left: 1px solid #86ae86; }
.tabtools { display: flex; gap: 12px; align-items: center; margin-left: auto; padding: 0 3px 0 9px; border-left: 1px solid #7da07d; }

/* Ribbon */
.ribbon { height: 73px; padding: 0 2px 1px 0; background: #a3c8a6; border-top: 1px solid #7fbf8a; }
.panel { display: flex; height: 100%; border: 1px solid #c9c9c9; border-radius: 4px; background: linear-gradient(#e6e6e6, #cfcfcf); }
.group { padding-left: 6px; background: repeating-linear-gradient(#888 0 1px, transparent 1px 3px) right 0 top 3px / 1px 64px no-repeat; flex: none; }
.group h2 { height: 14px; margin-left: -4px; text-align: center; font: 10px/14px "Open Sans", sans-serif; border-bottom: 1px solid #c4c4c4; }
.g-edit { width: 57px; }
.g-edit, .g-cells { padding-left: 2px; }
.g-font { width: 177px; }
.g-align { width: 250px; }
.g-num { width: 168px; }
.group.g-format { width: 128px; padding-left: 0; }
.g-cells { width: 67px; }
.group.g-theme { width: 95px; padding-left: 4px; }
.line { display: flex; align-items: center; gap: 6px; height: 21px; margin-top: 3px; }
.line + .line { margin-top: 6px; }
.face { width: 116px; height: 20px; }
.size { width: 49px; height: 20px; margin-left: -6px; }
.fmt { width: 156px; height: 20px; }
.line .pick { font-size: 11px; }
.seg { display: flex; height: 21px; border: 1px solid #989898; border-radius: 3px; background: linear-gradient(#f0f0f0, #c9c9c9); overflow: hidden; flex: none; }
.seg button { width: 28px; border-right: 1px solid #989898; }
.seg button:last-child { width: 27px; border-right: 0; }
.seg .on { background: linear-gradient(#848484, #9c9c9c); }
.seg button.dd, .seg button.dd:last-child { width: 10px; }
.serif { font: 17px/18px "Liberation Serif", serif; color: #444; }
.g-font .serif { font-size: 18px; }
.g-font .seg + .seg button { width: 27px; }
.g-font .seg + .seg button.dd { width: 10px; }
.ink { border-bottom: 3px solid #fff; line-height: 14px; padding: 0 3px; }
.seg.abc button:last-child { width: 36px; gap: 3px; font-size: 14px; }
.serif .kilo { font-size: 15px; }
.flat { gap: 3px; }
.wrap { gap: 2px; }
.wrap .caret { margin-left: 3px; }
.merge { padding-left: 6px; color: #888; flex: 1; justify-content: flex-start; margin-right: 10px; }
.merge .caret { margin-left: auto; }
.big { flex-direction: column; width: 100%; height: 53px; line-height: 12px; justify-content: space-between; padding-bottom: 3px; white-space: nowrap; }
.big .pic { display: flex; align-items: center; gap: 4px; height: 34px; }
.big.tight { padding-bottom: 0; justify-content: flex-start; }
.big.tight .pic { height: 30px; }
.bigs { display: flex; }
.g-format .big { width: 62px; }
.g-theme .big { width: 50px; }
.stack { display: flex; flex-direction: column; gap: 7px; padding: 3px 0 0 4px; }
.fonts { font: 700 17px/18px "Liberation Serif", serif; color: #3560ae; }

/* Formula bar */
.formula { display: flex; height: 20px; border-top: 1px solid #888; border-bottom: 1px solid #888; background: #e6e6e6; font-size: 12px; }
.ref { width: 114px; text-align: center; background: #fff; border-right: 1px solid #999; font: 12px/16px "Liberation Sans", Arial, sans-serif; }
.spin { width: 19px; border-right: 1px solid #aaa; }
.fxbtns { display: flex; align-items: center; justify-content: flex-end; gap: 9px; width: 99px; padding-right: 4px; }
.fxbtns button { flex: none; }
.fxbtns .fx { font: italic 700 15px/16px "Liberation Serif", serif; }
.entry { flex: 1; min-width: 0; padding-left: 8px; background: #fff; border-left: 1px solid #999; font-size: 13px; color: #000; }
.more { width: 15px; border-left: 1px solid #888; background: #f7f7f7; }
.more .caret { border-width: 5px 4px 0; }

/* Sheet */
.work { flex: 1; min-height: 0; display: flex; }
.sheet { position: relative; flex: 1; min-width: 0; overflow: hidden; }
.grid { width: 100%; table-layout: fixed; border-collapse: separate; border-spacing: 0; }
.w-rows { width: 22px; } .w-a { width: 10px; } .w-b { width: 118px; } .w-c { width: 91px; } .w-d { width: 91px; } .w-e { width: 86px; } .w-f { width: 65px; } .w-g { width: 119px; } .w-h { width: 57px; } .w-i { width: 37px; } .w-n { width: 42px; }
.grid th, .grid td { padding: 0; vertical-align: bottom; white-space: nowrap; }
.grid th { font: 700 9px/11px "Open Sans", sans-serif; color: #444; background: linear-gradient(90deg, #e4e4e4, #c9c9c9); border-right: 1px solid #888; border-bottom: 1px solid #888; }
.grid thead th { height: 14px; vertical-align: middle; font: 700 9px/11px "Liberation Sans", Arial, sans-serif; background: linear-gradient(#ececec, #c6c6c6); border-top: 1px solid #999; }
.grid thead .sel { color: #fff; background: linear-gradient(#a6a6a6, #828282); border-right-color: #555; }
.grid .corner { background: linear-gradient(135deg, transparent 50%, #fff 50%) 12px 2px / 8px 8px no-repeat, #c8c8c8; }
.grid .cut { overflow: hidden; padding-left: 15px; border-right: 0; }
.h1 { height: 31px; } .h2 { height: 16px; } .h5 { height: 11px; } .h6 { height: 28px; }
.grid .intro th { line-height: 10px; }
.grid .intro .h1 th { padding-bottom: 4px; }
.grid .title { padding-left: 4px; font: 25px/30px "Open Sans", sans-serif; color: #2a8a57; }
.grid .lead { padding-left: 3px; font: 13px/16px "Open Sans", sans-serif; color: #000; }
.grid .subtitle { padding-left: 5px; font: 22px/28px Lato, "Open Sans", sans-serif; color: #34494a; }
.data { font: 9px/12px Lato, "Open Sans", sans-serif; }
.data tr { height: 12px; }
.data .tall { height: 24px; }
.data .heads { height: 25px; }
.data th { color: #fff; background: #858585; border-color: #5a5a5a; }
.data td { background: #deedfe; color: #2a3d40; }
.data tr:nth-child(even) td { background-color: #c2e0db; }
.data tr td:nth-child(2) { background: #fff; }
.data td:nth-child(3) { border-left: 2px solid #0f3bc4; padding-left: 1px; }
.data td:nth-child(4) { padding-left: 2px; }
.data td:nth-child(n+5) { text-align: right; padding-right: 6px; }
.data td:nth-child(n+7) { color: #1f5229; }
.data td:nth-child(8) { position: relative; border-right: 2px solid #0f3bc4; padding-right: 4px; }
.data td.neg { padding-right: 3px; }
.data td i { position: absolute; left: 1px; top: 1px; bottom: 3px; background: #70c1a2; }
.data td:nth-child(8) span { position: relative; }
.data tr td.mark { background-image: linear-gradient(135deg, #37865a 50%, transparent 50%); background-size: 6px 6px; background-repeat: no-repeat; }
.data .heads td:nth-child(n+3) { border-top: 2px solid #0f3bc4; border-bottom: 1px solid #3c8f35; padding-right: 0; text-align: left; color: #4f6a70; }
.data .heads td:nth-child(3) { background: #fff; }
.data .heads td:nth-child(n+5) { padding-left: 2px; }
.heads div { display: flex; align-items: flex-end; justify-content: space-between; height: 22px; overflow: hidden; }
.heads span { white-space: normal; flex: 1; }
.heads button { width: 17px; height: 17px; margin-bottom: 1px; flex: none; border: 1px solid #6b93cd; background: linear-gradient(#e8f1fb 50%, #a9cbe4 50%); }
.heads button::before { content: ""; border: 5px solid transparent; border-top: 5px solid #222; border-bottom: 0; }

/* Step cards floating over the sheet */
.steps { position: absolute; left: 689px; top: 113px; width: 271px; list-style: none; font: 10px/11px "Liberation Sans", Arial, sans-serif; color: #17603f; }
.steps li { display: flex; align-items: flex-start; height: 38px; padding-left: 2px; border: 1px solid #2b8560; border-top: 0; }
.steps li.first { height: 44px; border-top: 1px solid #2b8560; }
.steps li.last { height: 39px; margin-top: 4px; border-top: 1px solid #2b8560; }
.steps p { flex: 1; padding: 4px 8px 0 8px; }
.steps .last p { padding: 8px 0 0 14px; }
.no { display: flex; align-items: center; justify-content: center; width: 30px; height: 26px; border-radius: 50%; background: #349b69; color: #fff; font: 18px/20px "Liberation Sans", Arial, sans-serif; }
.first .no { height: 32px; }

/* Scroll bars */
.vscroll { display: flex; flex-direction: column; align-items: center; width: 15px; border-left: 1px solid #888; background: #f7f7f7; }
.split { width: 100%; height: 14px; background: linear-gradient(#888 0 1px, transparent 1px 3px, #888 3px 4px, transparent 4px) center 5px / 9px 5px no-repeat, #fff; border-bottom: 1px solid #888; }
.thumb { width: 8px; height: 162px; margin-top: 1px; border-radius: 4px; background: #b4b4b4; }

/* Bottom */
.bottom { display: grid; grid-template: 17px 17px / 65px 1fr; }
.views { grid-row: 1 / 3; display: flex; padding: 4px 3px 6px 2px; background: linear-gradient(#f4f4f4, #d8d8d8); border-top: 1px solid #999; border-right: 1px solid #999; }
.views button { flex: 1; border: 1px solid #555; border-radius: 0 4px 4px 0; background: linear-gradient(#fff, #cfcfcf); }
.views .on { border-radius: 4px 0 0 4px; background: #4c4c4c; }
.strip { display: flex; border-top: 1px solid #888; border-bottom: 1px solid #888; background: #8594ad; }
.navs { width: 66px; padding: 2px 5px; background: #ececec; }
.sheets { display: flex; flex: none; width: 512px; padding-left: 13px; border-right: 4px solid #c4c4c4; font: 600 11px/14px "Open Sans", sans-serif; color: #000; }
.sheets button { height: 15px; width: 51px; border: 1px solid #666; border-top: 0; border-radius: 0 0 12px 5px; background: linear-gradient(#dedede, #c6c6c6); }
.sheets button.on { width: auto; background: #fff; padding: 0 5px; }
.sheets button.add { width: 23px; font-weight: 700; }
.hscroll { flex: 1; display: flex; align-items: center; padding-left: 2px; background: linear-gradient(#e8e8e8, #fafafa); }
.hscroll .thumb { width: 175px; height: 8px; margin: 0; }
.hsplit { width: 12px; border: solid #888; border-width: 0 1px; background: linear-gradient(90deg, #888 0 1px, transparent 1px 3px, #888 3px 4px, transparent 4px) center / 5px 9px no-repeat, #fff; }
.end { width: 15px; background: #fff; }
.status { display: flex; background: linear-gradient(#f2f2f2, #d4d4d4); font: 600 11px/16px "Open Sans", sans-serif; }
.status > * { border-right: 1px solid #999; flex: none; }
.s1 { width: 93px; }
.s2 { width: 393px; padding-left: 6px; }
.s3 { width: 155px; }
.s4 { width: 139px; padding: 0 5px 0 3px; justify-content: space-between; }
.s4 .caret { border-width: 5px 5px 0; border-top-color: #000; }
.s5 { width: 34px; }
.status .s6 { flex: 1; border: 0; display: flex; justify-content: flex-end; align-items: flex-end; }
```
